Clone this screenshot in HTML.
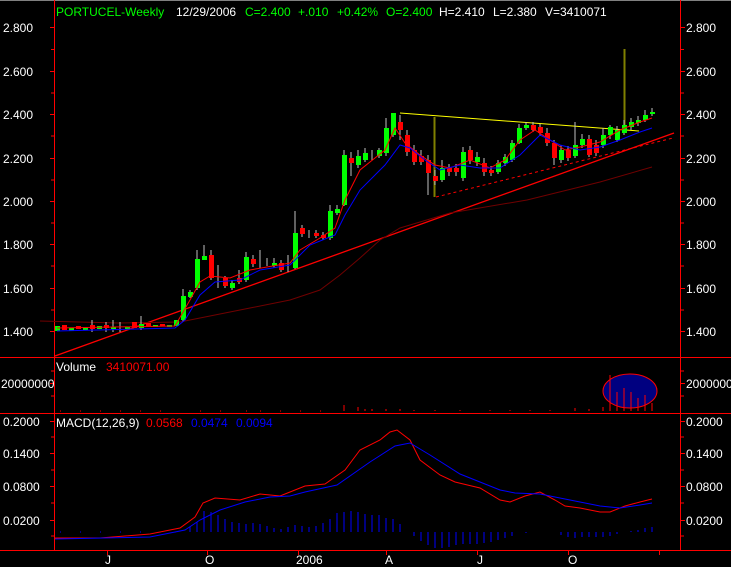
<!DOCTYPE html><html><head><style>
body{margin:0;background:#000;width:731px;height:567px;overflow:hidden}
svg{display:block}
text{font-family:"Liberation Sans",sans-serif;font-size:12px;fill:#fff}
</style></head><body>
<svg width="731" height="567" viewBox="0 0 731 567">
<rect width="731" height="567" fill="#000"/>
<line x1="0" y1="0.5" x2="731" y2="0.5" stroke="#808080"/>
<g stroke="#f00" stroke-width="1">
<line x1="54.5" y1="0" x2="54.5" y2="550"/>
<line x1="680.5" y1="0" x2="680.5" y2="550"/>
<line x1="0" y1="357.5" x2="731" y2="357.5"/>
<line x1="0" y1="413.5" x2="731" y2="413.5"/>
<line x1="0" y1="550.5" x2="731" y2="550.5"/>
<path d="M50 27.5h4M50 71.5h4M50 114.5h4M50 158.5h4M50 201.5h4M50 244.5h4M50 288.5h4M50 331.5h4M51 49.5h3M51 93h3M51 136h3M51 180h3M51 223h3M51 266h3M51 310h3
M681 27.5h4M681 71.5h4M681 114.5h4M681 158.5h4M681 201.5h4M681 244.5h4M681 288.5h4M681 331.5h4M681 49.5h3M681 93h3M681 136h3M681 180h3M681 223h3M681 266h3M681 310h3
M50 383.5h4M681 383.5h4M681 371h3M681 396h3M51 371h3M51 396h3
M50 421.5h4M50 453.5h4M50 486.5h4M50 520.5h4M681 421.5h4M681 453.5h4M681 486.5h4M681 520.5h4M51 437h3M51 470h3M51 503h3M51 536h3M681 437h3M681 470h3M681 503h3M681 536h3
M107.5 550v5M207.5 550v5M298.5 550v5M386.5 550v5M477.5 550v5M568.5 550v5M659.5 550v5"/>
</g>
<text x="56" y="16" style="fill:#0f0">PORTUCEL-Weekly</text>
<text x="176" y="16">12/29/2006</text>
<text x="245" y="16" style="fill:#0f0">C=2.400</text>
<text x="298" y="16" style="fill:#0f0">+.010</text>
<text x="337" y="16" style="fill:#0f0">+0.42%</text>
<text x="386" y="16" style="fill:#0f0">O=2.400</text>
<text x="439" y="16">H=2.410</text>
<text x="493" y="16">L=2.380</text>
<text x="545" y="16">V=3410071</text>
<g>
<text x="3" y="32">2.800</text><text x="3" y="76">2.600</text><text x="3" y="119">2.400</text><text x="3" y="163">2.200</text><text x="3" y="206">2.000</text><text x="3" y="249">1.800</text><text x="3" y="293">1.600</text><text x="3" y="336">1.400</text>
<text x="686" y="32">2.800</text><text x="686" y="76">2.600</text><text x="686" y="119">2.400</text><text x="686" y="163">2.200</text><text x="686" y="206">2.000</text><text x="686" y="249">1.800</text><text x="686" y="293">1.600</text><text x="686" y="336">1.400</text>
<text x="1" y="388">20000000</text><text x="686" y="388">20000000</text>
<text x="3" y="426">0.2000</text><text x="3" y="458">0.1400</text><text x="3" y="491">0.0800</text><text x="3" y="525">0.0200</text>
<text x="686" y="426">0.2000</text><text x="686" y="458">0.1400</text><text x="686" y="491">0.0800</text><text x="686" y="525">0.0200</text>
<text x="105" y="564">J</text><text x="205" y="564">O</text><text x="296" y="564">2006</text><text x="385" y="564">A</text><text x="477" y="564">J</text><text x="568" y="564">O</text>
<text x="56" y="371">Volume</text><text x="106" y="371" style="fill:#f00">3410071.00</text>
<text x="56" y="427">MACD(12,26,9)</text><text x="146" y="427" style="fill:#f00">0.0568</text><text x="191" y="427" style="fill:#00f">0.0474</text><text x="236" y="427" style="fill:#00f">0.0094</text>
</g>
<polyline points="55,356 674,133" stroke="#f00" fill="none" stroke-width="1.3"/>
<polyline points="436,197 673,138" stroke="#f00" fill="none" stroke-dasharray="3,3"/>
<polyline points="40,321 118,323 180,322 210,316 250,308 290,300 320,290 340,275 360,258 380,240 400,228 450,213 527,200 600,182 652,167" stroke="#700000" fill="none"/>
<polyline points="400,113 639,131" stroke="#ff0" fill="none"/>
<line x1="434.5" y1="117" x2="434.5" y2="197" stroke="#808000" stroke-width="2"/>
<line x1="624.5" y1="49" x2="624.5" y2="133" stroke="#808000" stroke-width="2"/>
<g stroke="#c0c0c0">
<path d="M92 320v12M106 322v10M113 320v12M120 322v10M141 316v14M183 289v33M190 290v8M197 250v40M204 245v15M211 250v30M218 265v23M225 276v12M232 280v10M239 270v14M246 252v30M253 255v12M260 250v18M267 258v8M274 258v10M281 260v12M288 255v17M295 211v58M302 225v12M309 230v8M316 230v8M323 232v8M330 205v35M337 205v10M344 150v56M351 152v24M358 150v18M365 148v14M372 150v10M379 148v10M386 118v38M393 113v24M400 115v25M407 130v26M414 145v20M421 150v15M428 155v40M435 170v15M442 160v22M449 164v12M456 164v12M463 147v34M470 146v18M477 152v14M484 158v18M491 166v10M498 160v14M505 154v12M512 140v22M519 124v20M526 122v8M533 122v10M540 124v12M547 128v18M554 140v25M561 145v18M568 146v15M575 122v36M582 134v14M589 135v22M596 140v16M603 128v20M610 125v14M617 126v16M624 120v15M631 118v12M638 116v10M645 110v12M652 108v8"/>
</g>
<g fill="#0f0">
<rect x="55" y="326" width="5" height="5"/><rect x="69" y="328" width="5" height="3"/><rect x="83" y="327" width="5" height="3"/><rect x="97" y="326" width="5" height="3"/><rect x="111" y="327" width="5" height="2"/><rect x="125" y="327" width="5" height="2"/><rect x="139" y="324" width="5" height="4"/><rect x="153" y="325" width="5" height="2"/><rect x="167" y="325" width="5" height="2"/><rect x="174" y="320" width="5" height="6"/>
<rect x="181" y="296" width="5" height="24"/><rect x="188" y="292" width="5" height="5"/><rect x="195" y="259" width="5" height="29"/><rect x="202" y="256" width="5" height="4"/><rect x="230" y="283" width="5" height="5"/><rect x="244" y="257" width="5" height="23"/><rect x="272" y="263" width="5" height="3"/><rect x="293" y="233" width="5" height="35"/>
<rect x="328" y="211" width="5" height="27"/><rect x="335" y="209" width="5" height="4"/><rect x="342" y="155" width="5" height="50"/><rect x="356" y="156" width="5" height="9"/><rect x="363" y="153" width="5" height="7"/><rect x="377" y="150" width="5" height="6"/><rect x="384" y="128" width="5" height="25"/><rect x="391" y="113" width="5" height="22"/>
<rect x="440" y="168" width="5" height="12"/><rect x="461" y="152" width="5" height="26"/><rect x="475" y="157" width="5" height="5"/><rect x="496" y="163" width="5" height="9"/><rect x="503" y="157" width="5" height="6"/><rect x="510" y="143" width="5" height="17"/><rect x="517" y="128" width="5" height="15"/><rect x="524" y="125" width="5" height="3"/>
<rect x="559" y="150" width="5" height="10"/><rect x="573" y="145" width="5" height="11"/><rect x="580" y="139" width="5" height="6"/><rect x="601" y="135" width="5" height="10"/><rect x="608" y="127" width="5" height="8"/><rect x="615" y="130" width="5" height="10"/><rect x="622" y="125" width="5" height="8"/><rect x="629" y="122" width="5" height="5"/><rect x="636" y="120" width="5" height="3"/><rect x="643" y="115" width="5" height="5"/><rect x="650" y="112" width="5" height="2"/>
</g>
<g fill="#f00">
<rect x="62" y="325" width="5" height="5"/><rect x="76" y="326" width="5" height="3"/><rect x="90" y="325" width="5" height="4"/><rect x="104" y="325" width="5" height="3"/><rect x="132" y="322" width="5" height="6"/><rect x="146" y="323" width="5" height="3"/><rect x="160" y="324" width="5" height="2"/>
<rect x="209" y="255" width="5" height="23"/><rect x="223" y="278" width="5" height="8"/><rect x="237" y="278" width="5" height="4"/><rect x="251" y="259" width="5" height="5"/><rect x="279" y="263" width="5" height="7"/><rect x="300" y="228" width="5" height="6"/><rect x="314" y="233" width="5" height="3"/><rect x="321" y="235" width="5" height="3"/><rect x="349" y="158" width="5" height="5"/>
<rect x="398" y="122" width="5" height="8"/><rect x="405" y="135" width="5" height="17"/><rect x="412" y="150" width="5" height="12"/><rect x="419" y="156" width="5" height="6"/><rect x="426" y="160" width="5" height="13"/><rect x="433" y="176" width="5" height="5"/><rect x="447" y="168" width="5" height="4"/><rect x="454" y="168" width="5" height="4"/><rect x="468" y="150" width="5" height="10"/><rect x="482" y="163" width="5" height="9"/><rect x="489" y="170" width="5" height="3"/>
<rect x="531" y="125" width="5" height="5"/><rect x="538" y="127" width="5" height="6"/><rect x="545" y="133" width="5" height="10"/><rect x="552" y="143" width="5" height="15"/><rect x="566" y="150" width="5" height="8"/><rect x="587" y="139" width="5" height="16"/><rect x="594" y="145" width="5" height="8"/>
</g>
<polyline points="57,328 175,326 190,300 200,282 210,276 230,278 250,270 290,263 300,250 320,238 335,228 345,200 360,170 385,150 395,128 405,143 420,155 435,165 450,168 470,160 490,168 505,160 520,140 535,130 550,140 565,150 580,147 600,142 620,130 640,122 652,118" stroke="#f00" fill="none"/>
<polyline points="57,331 175,328 185,320 200,295 215,282 240,280 260,270 290,265 310,245 335,235 345,215 360,190 385,165 400,145 410,148 425,160 440,170 460,165 480,168 500,168 520,155 540,135 560,145 580,150 600,147 620,140 640,132 652,128" stroke="#00f" fill="none"/>
<path d="M60 411h1M80 411h1M100 411h1M120 411h1M140 411h1M160 411h1M200 411h1M220 411h1M246 411h1M260 411h1M280 411h1M300 411h1M320 411h1M344 405v6M358 407v4M365 409v2M372 409v2M386 409v2M400 409v2M414 410v1M435 410v1M460 410v1M490 410v1M510 410v1M530 410v1M550 410v1M575 408v3M589 409v2M603 407v4M610 387v24M617 390v21M624 393v18M631 393v18M638 395v16M645 397v14M652 403v8" stroke="#f00"/>
<ellipse cx="630" cy="391" rx="27" ry="17" fill="#000080" stroke="#f00"/>
<path d="M610 375v34M617 392v17M624 388v21M631 392v17M638 398v11M645 395v14" stroke="#f00"/>
<path d="M190 532v-5M197 532v-10M204 532v-21M211 532v-20M218 532v-17M225 532v-13M232 532v-10M239 532v-9M246 532v-8M253 532v-9M260 532v-8M267 532v-6M274 532v-4M281 532v-3M288 532v-5M295 532v-7M302 532v-6M309 532v-5M316 532v-6M323 532v-9M330 532v-13M337 532v-19M344 532v-20M351 532v-21M358 532v-20M365 532v-18M372 532v-17M379 532v-17M386 532v-14M393 532v-13M400 532v-8M414 532v4M421 532v9M428 532v13M435 532v16M442 532v16M449 532v15M456 532v13M463 532v12M470 532v12M477 532v12M484 532v11M491 532v10M498 532v8M505 532v6M512 532v4M526 532v1M561 532v3M568 532v5M575 532v6M582 532v5M589 532v5M596 532v5M603 532v5M610 532v4M617 532v2M631 532v-1M638 532v-2M645 532v-4M652 532v-5M60 532h1M80 532h1M100 532h1M120 532h1M140 532h1M160 532h1M175 532h1" stroke="#00f"/>
<polyline points="55,538 100,538 150,534 180,528 195,517 203,503 215,498 240,500 260,494 280,496 290,492 305,486 325,484 345,470 360,450 380,440 390,432 397,430 410,440 420,460 440,475 455,482 480,488 500,500 510,502 525,496 540,492 555,500 565,506 580,508 600,512 610,512 625,506 640,502 652,499" stroke="#f00" fill="none"/>
<polyline points="55,539 150,537 185,530 200,520 220,510 245,502 270,497 290,496 305,492 337,485 370,462 395,446 410,443 430,455 460,474 500,490 515,493 540,494 570,500 600,506 620,508 640,505 652,503" stroke="#00f" fill="none"/>
</svg>
</body></html>
